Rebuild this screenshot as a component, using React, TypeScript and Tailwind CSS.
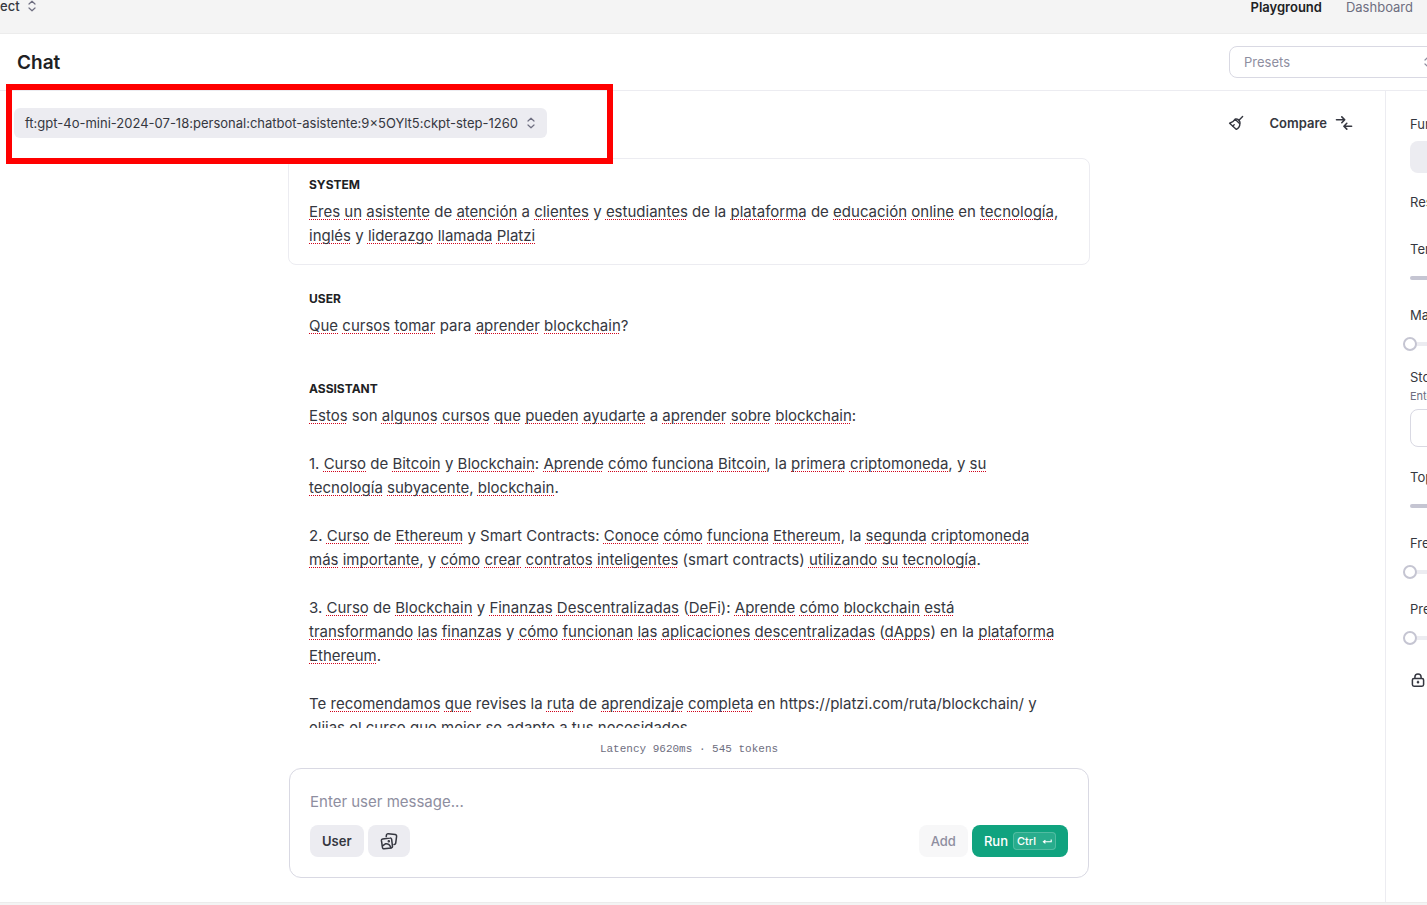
import { ReactNode } from "react";

/* Words wrapped in underscores are the ones flagged by the spell checker. */
function Spelled({ line }: { line: string }) {
  return (
    <>
      {line.split("_").map((part, i) =>
        i % 2 === 1 ? (
          <span
            key={i}
            className="underline decoration-[#d0021b] decoration-dotted decoration-1 underline-offset-2 [text-decoration-skip-ink:none]"
          >
            {part}
          </span>
        ) : (
          part
        )
      )}
    </>
  );
}

function Message({ role, lines, className = "" }: { role: string; lines: string[]; className?: string }) {
  return (
    <section className={className}>
      <h2 className="text-xs leading-4 font-bold text-[#202123]">{role}</h2>
      <p className="mt-[7px] text-[15px] leading-6 text-[#353740]">
        {lines.map((line, i) => (
          <span key={i} className="block min-h-6 whitespace-nowrap">
            <Spelled line={line} />
          </span>
        ))}
      </p>
    </section>
  );
}

function UpDown({ className = "" }: { className?: string }) {
  return (
    <svg viewBox="0 0 8 12" className={"h-3 w-2 shrink-0 " + className} fill="none" stroke="currentColor" strokeWidth="1.2" strokeLinecap="round" strokeLinejoin="round">
      <path d="M1 4 4 1.2 7 4M1 8 4 10.8 7 8" />
    </svg>
  );
}

function Broom() {
  return (
    <svg viewBox="0 0 16 16" className="size-4" fill="none" stroke="currentColor" strokeWidth="1.4" strokeLinecap="round" strokeLinejoin="round">
      <path d="M14.6 1.6 11 5.2" />
      <path d="M7.2 4.2 11.8 8.8 C12 11 10.8 13 8.4 14.4 L1.6 8.2 C3.2 7.6 5.6 7 7.2 4.2Z" />
      <path d="M7.4 4.2C8.8 3.6 10.2 4.2 11 5.2S12.4 7.4 11.8 8.6" />
      <path d="M4.8 11 6.2 9.8" />
    </svg>
  );
}

function CompareArrows() {
  return (
    <svg viewBox="0 0 18 16" className="h-4 w-[18px]" fill="none" stroke="currentColor" strokeWidth="1.6" strokeLinecap="round" strokeLinejoin="round">
      <path d="M1.5 4.8h8M6.8 1.9l2.9 2.9-2.9 2.9" />
      <path d="M16.6 11.2H9M11.8 8.3l-2.9 2.9 2.9 2.9" />
    </svg>
  );
}

function Pictures() {
  return (
    <svg viewBox="0 0 18 18" className="size-[18px]" fill="none" stroke="currentColor" strokeWidth="1.5" strokeLinecap="round" strokeLinejoin="round">
      <path d="M6.2 4.6 6.5 3A1.5 1.5 0 0 1 8.2 1.7L15.3 2.6A1.5 1.5 0 0 1 16.6 4.3L15.7 11.2A1.5 1.5 0 0 1 14 12.5" />
      <path d="M2.6 6.9 10 6A1.4 1.4 0 0 1 11.6 7.2L12.5 14.3A1.4 1.4 0 0 1 11.3 15.9L4.1 16.8A1.4 1.4 0 0 1 2.5 15.6L1.4 8.4A1.4 1.4 0 0 1 2.6 6.9Z" />
      <path d="M2.5 13.8 5.4 11.8C8 11.4 10 13.2 11 15.6" />
      <circle cx="8.8" cy="9.2" r=".5" fill="currentColor" />
    </svg>
  );
}

function Lock() {
  return (
    <svg viewBox="0 0 14 14" className="size-[14px]" fill="none" stroke="currentColor" strokeWidth="1.5" strokeLinejoin="round">
      <rect x="1.4" y="5.4" width="11.2" height="7.8" rx="1.6" />
      <path d="M3.9 5.2V4a3.1 3.1 0 0 1 6.2 0v1.2" />
      <path d="M7 7.8v2.8M5.8 9.2h2.4" />
    </svg>
  );
}

function Slider({ label, full = false, className = "" }: { label: string; full?: boolean; className?: string }) {
  const base = "mt-3 block h-[14px] appearance-none bg-transparent ";
  const thumb =
    "[&::-webkit-slider-thumb]:-mt-[5px] [&::-webkit-slider-thumb]:size-[14px] [&::-webkit-slider-thumb]:appearance-none [&::-webkit-slider-thumb]:rounded-full [&::-webkit-slider-thumb]:border-2 [&::-webkit-slider-thumb]:border-[#c5c5d2] [&::-webkit-slider-thumb]:bg-white ";
  const track = full
    ? "w-[200px] [&::-webkit-slider-runnable-track]:h-1 [&::-webkit-slider-runnable-track]:rounded-full [&::-webkit-slider-runnable-track]:bg-[#c5c5d2]"
    : "-ml-[7px] w-[207px] [&::-webkit-slider-runnable-track]:h-1 [&::-webkit-slider-runnable-track]:rounded-full [&::-webkit-slider-runnable-track]:bg-[#ececf1]";
  return (
    <label className={"block " + className}>
      <span className="block whitespace-nowrap">{label}</span>
      <input type="range" min="0" max="1" step="0.01" defaultValue={full ? 1 : 0} className={base + thumb + track} />
    </label>
  );
}

function SoftButton({ children, label }: { children: ReactNode; label?: string }) {
  return (
    <button type="button" aria-label={label} className="flex h-8 items-center rounded-lg bg-[#ececf1] px-3 font-semibold text-[#353740]">
      {children}
    </button>
  );
}

const system = [
  "_Eres_ _un_ _asistente_ de _atención_ a _clientes_ y _estudiantes_ de la _plataforma_ de _educación_ _online_ en _tecnología_,",
  "_inglés_ y _liderazgo_ _llamada_ _Platzi_",
];

const user = ["_Que_ _cursos_ _tomar_ para _aprender_ _blockchain_?"];

const assistant = [
  "_Estos_ son _algunos_ _cursos_ _que_ _pueden_ _ayudarte_ a _aprender_ _sobre_ _blockchain_:",
  "",
  "1. _Curso_ de _Bitcoin_ y _Blockchain_: _Aprende_ _cómo_ _funciona_ _Bitcoin_, la _primera_ _criptomoneda_, y _su_",
  "_tecnología_ _subyacente_, _blockchain_.",
  "",
  "2. _Curso_ de _Ethereum_ y Smart Contracts: _Conoce_ _cómo_ _funciona_ _Ethereum_, la _segunda_ _criptomoneda_",
  "_más_ _importante_, y _cómo_ _crear_ _contratos_ _inteligentes_ (smart contracts) _utilizando_ _su_ _tecnología_.",
  "",
  "3. _Curso_ de _Blockchain_ y _Finanzas_ _Descentralizadas_ (_DeFi_): _Aprende_ _cómo_ _blockchain_ _está_",
  "_transformando_ _las_ _finanzas_ y _cómo_ _funcionan_ _las_ _aplicaciones_ _descentralizadas_ (_dApps_) en la _plataforma_",
  "_Ethereum_.",
  "",
  "Te _recomendamos_ _que_ revises la _ruta_ de _aprendizaje_ _completa_ en https://platzi.com/ruta/blockchain/ y",
  "elijas el curso que mejor se adapte a tus necesidades.",
];

export default function App() {
  return (
    <div className="flex h-screen flex-col overflow-hidden bg-white font-['Inter','Liberation_Sans',sans-serif] text-[13px] leading-5 text-[#353740]">
      <header className="flex h-[34px] shrink-0 items-start justify-between border-b border-[#ececec] bg-[#f4f4f4] pr-[14px]">
        <button className="-mt-1 flex items-center gap-2 font-medium">
          ect
          <UpDown className="text-[#6e6e80]" />
        </button>
        <nav className="-mt-[3px] flex gap-6">
          <a href="#playground" className="font-semibold text-[#202123]">Playground</a>
          <a href="#dashboard" className="text-[#6e6e80]">Dashboard</a>
        </nav>
      </header>

      <div className="flex h-[57px] shrink-0 items-center justify-between border-b border-[#ececf1] pl-[17px]">
        <h1 className="pt-[2px] text-[19px] leading-7 font-semibold text-[#202123]">Chat</h1>
        <div className="w-[198px] overflow-hidden">
          <div className="flex h-8 w-[212px] items-center rounded-lg border border-[#d9d9e3]">
            <select aria-label="Presets" className="h-full flex-1 appearance-none bg-transparent pl-[14px] text-[#8e8ea0]">
              <option>Presets</option>
            </select>
            <UpDown className="mr-2 text-[#8e8ea0]" />
          </div>
        </div>
      </div>

      <div className="flex min-h-0 flex-1">
        <main className="relative flex min-w-0 flex-1 flex-col items-center pt-[17px] pr-[7px] pb-6">
          <div className="flex w-full shrink-0 items-center justify-between pr-[25px] pl-[14px]">
            <button className="flex h-[30px] items-center gap-[9px] rounded-md bg-[#ececf1] pr-3 pl-[11px]">
              ft:gpt-4o-mini-2024-07-18:personal:chatbot-asistente:9x5OYlt5:ckpt-step-1260
              <UpDown className="text-[#6e6e80]" />
            </button>
            <div className="flex items-center gap-[26px]">
              <button aria-label="Clear">
                <Broom />
              </button>
              <button className="flex items-center gap-2 font-semibold">
                Compare
                <CompareArrows />
              </button>
            </div>
          </div>
          <div className="pointer-events-none absolute top-[-7px] left-[6px] h-20 w-[607px] border-6 border-[#ff0000]" />

          <div className="mt-5 min-h-0 w-full max-w-[802px] flex-1 overflow-hidden">
            <Message role="SYSTEM" lines={system} className="rounded-lg border border-[#ececf1] px-5 pt-[18px] pb-4" />
            <Message role="USER" lines={user} className="px-[21px] pt-[26px]" />
            <Message role="ASSISTANT" lines={assistant} className="px-[21px] pt-[43px]" />
          </div>

          <p className="flex h-10 shrink-0 items-center pt-[2px] font-['Liberation_Mono',monospace] text-[11px] text-[#6e6e80]">
            Latency 9620ms · 545 tokens
          </p>

          <form className="w-full max-w-[800px] shrink-0 rounded-xl border border-[#d9d9e3] px-5 pt-[21px] pb-5" onSubmit={(e) => e.preventDefault()}>
            <textarea
              aria-label="User message"
              rows={1}
              placeholder="Enter user message..."
              className="block h-6 w-full resize-none overflow-hidden text-[15px] leading-6 placeholder:text-[#8e8ea0]"
            />
            <div className="mt-[11px] flex items-center justify-between">
              <div className="flex gap-1">
                <SoftButton>User</SoftButton>
                <SoftButton label="Add image">
                  <Pictures />
                </SoftButton>
              </div>
              <div className="flex gap-1">
                <button type="button" className="h-8 rounded-lg bg-[#f7f7f8] px-3 font-medium text-[#8e8ea0]">Add</button>
                <button type="submit" className="flex h-8 items-center gap-[5px] rounded-lg bg-[#10a37f] px-3 font-medium text-white">
                  Run
                  <kbd className="flex h-[18px] items-center gap-[6px] rounded-sm border border-white/20 bg-white/10 px-[3px] font-['Inter',sans-serif] text-[11px] font-medium">
                    Ctrl
                    <svg viewBox="0 0 10 8" className="h-2 w-[10px]" fill="none" stroke="currentColor" strokeWidth="1.1">
                      <path d="M9.2 2.4v2.4H1.5M3.4 3.2 1.4 4.8 3.4 6.4" />
                    </svg>
                  </kbd>
                </button>
              </div>
            </div>
          </form>
        </main>

        <aside className="w-[42px] shrink-0 overflow-hidden border-l border-[#ececf1] pt-[23px] pl-6">
          <div className="w-[200px]">
            <h2>Functions</h2>
            <button aria-label="Add function" className="mt-[7px] block h-8 w-full rounded-lg bg-[#ececf1]" />
            <h2 className="mt-[19px] whitespace-nowrap">Response format</h2>
            <Slider label="Temperature" full className="mt-[27px]" />
            <Slider label="Maximum Tokens" className="mt-5" />
            <label className="mt-4 block">
              <span className="block whitespace-nowrap">Stop sequences</span>
              <span className="mt-px block text-[11px] leading-4 whitespace-nowrap text-[#6e6e80]">Enter sequence and press Tab</span>
              <input type="text" className="mt-[5px] block h-[38px] w-full rounded-lg border border-[#d9d9e3]" />
            </label>
            <Slider label="Top P" full className="mt-5" />
            <Slider label="Frequency penalty" className="mt-5" />
            <Slider label="Presence penalty" className="mt-5" />
            <div className="mt-7 pl-px">
              <Lock />
            </div>
          </div>
        </aside>
      </div>

      <footer className="h-[3px] shrink-0 border-t border-[#ececec] bg-[#f4f4f4]" />
    </div>
  );
}
